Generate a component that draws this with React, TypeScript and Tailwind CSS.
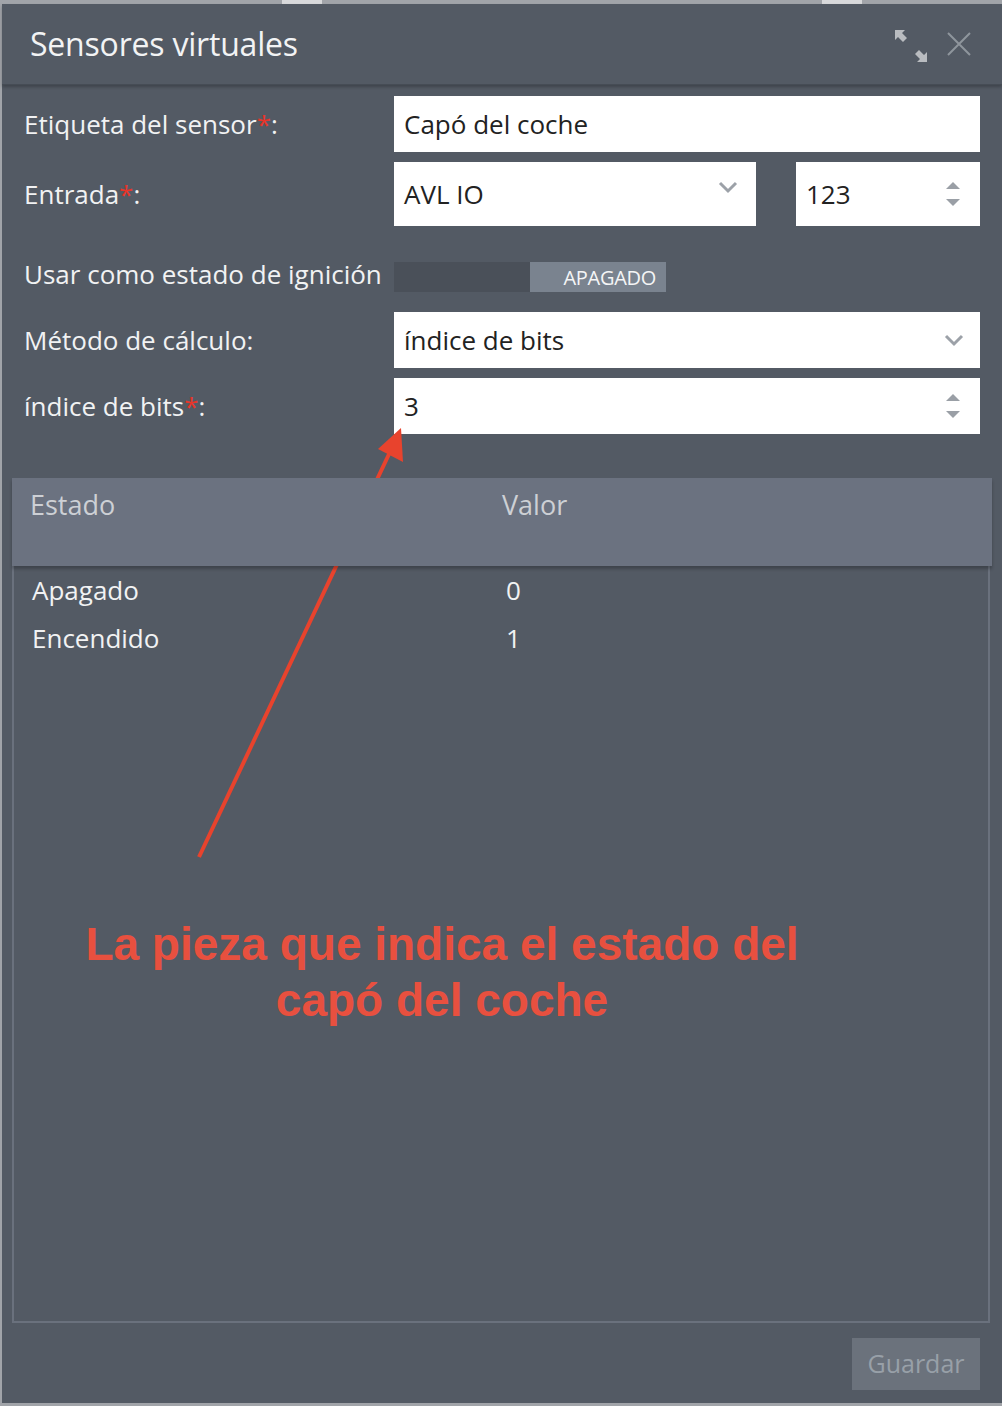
import React from "react";

const Chevron = ({ className = "" }: { className?: string }) => (
  <svg width="20" height="14" viewBox="0 0 20 14" className={className}>
    <path d="M2 3 L10 11 L18 3" fill="none" stroke="#9ca1a8" strokeWidth="3" />
  </svg>
);

const Spinner = () => (
  <svg width="16" height="30" viewBox="0 0 16 30">
    <path d="M1 10 L8 3 L15 10 Z" fill="#9a9fa6" />
    <path d="M1 20 L8 27 L15 20 Z" fill="#9a9fa6" />
  </svg>
);

const Req = () => <span className="text-[#e8352a]">*</span>;

export default function App() {
  return (
    <div
      className="relative w-[1002px] h-[1406px] bg-[#a1a4a9] overflow-hidden"
      style={{ fontFamily: '"Open Sans", "Noto Sans", sans-serif' }}
    >
      {/* top strip highlights */}
      <div className="absolute top-0 left-[282px] w-[40px] h-[4px] bg-[#d8d9db]" />
      <div className="absolute top-0 left-[822px] w-[40px] h-[4px] bg-[#d8d9db]" />

      <div className="absolute left-[2px] top-[4px] w-[1000px] h-[1399px] bg-[#535a64] flex flex-col">
        {/* header */}
        <div className="h-[81px] flex items-center justify-between pl-[28px] pr-[30px] border-b border-[#464c55] shadow-[0_2px_3px_rgba(0,0,0,0.25)]">
          <div className="text-[32px] text-[#f2f3f4] tracking-[-0.2px] pb-[1px]">Sensores virtuales</div>
          <div className="flex items-center gap-[18px]">
            <svg width="34" height="34" viewBox="0 0 34 34" className="mt-[4px]">
              <path d="M1 1 L11 1 L8 4 L13 9 L9 13 L4 8 L1 11 Z" fill="#b9bcc0" />
              <path d="M33 33 L23 33 L26 30 L21 25 L25 21 L30 26 L33 23 Z" fill="#b9bcc0" />
            </svg>
            <svg width="26" height="26" viewBox="0 0 26 26">
              <path d="M2 2 L24 24 M24 2 L2 24" stroke="#8f959c" strokeWidth="2" />
            </svg>
          </div>
        </div>

        {/* form */}
        <div className="pl-[22px] pr-[22px] pt-[11px] flex flex-col text-[#f1f2f3] text-[26px]">
          <div className="flex items-center h-[56px]">
            <div className="w-[370px]">
              Etiqueta del sensor<Req />:
            </div>
            <div className="flex-1 h-[56px] bg-white flex items-center px-[10px] text-[#222]">
              Capó del coche
            </div>
          </div>

          <div className="flex items-center h-[64px] mt-[10px]">
            <div className="w-[370px]">
              Entrada<Req />:
            </div>
            <div className="w-[362px] h-[64px] bg-white flex items-center justify-between pl-[10px] pr-[18px] text-[#222]">
              <span>AVL IO</span>
              <Chevron className="-mt-[14px]" />
            </div>
            <div className="ml-[40px] flex-1 h-[64px] bg-white flex items-center justify-between pl-[10px] pr-[19px] text-[#222]">
              <span>123</span>
              <Spinner />
            </div>
          </div>

          <div className="flex items-center h-[30px] mt-[36px]">
            <div className="w-[370px] whitespace-nowrap pb-[5px]">Usar como estado de ignición</div>
            <div className="flex h-[30px] w-[272px]">
              <div className="w-[136px] bg-[#4a5059]" />
              <div className="w-[136px] bg-[#7a838f] flex items-center justify-end pr-[10px] text-[20px] text-[#f4f5f6] tracking-[-0.3px] pt-[2px]">
                APAGADO
              </div>
            </div>
          </div>

          <div className="flex items-center h-[56px] mt-[20px]">
            <div className="w-[370px]">Método de cálculo:</div>
            <div className="flex-1 h-[56px] bg-white flex items-center justify-between pl-[10px] pr-[16px] text-[#222]">
              <span>índice de bits</span>
              <Chevron />
            </div>
          </div>

          <div className="flex items-center h-[56px] mt-[10px]">
            <div className="w-[370px]">
              índice de bits<Req />:
            </div>
            <div className="flex-1 h-[56px] bg-white flex items-center justify-between pl-[10px] pr-[19px] text-[#222]">
              <span>3</span>
              <Spinner />
            </div>
          </div>
        </div>

        {/* table */}
        <div className="ml-[10px] mr-[10px] mt-[44px] flex flex-col">
          <div className="h-[88px] bg-[#6b7280] flex items-start pt-[7px] text-[27px] text-[#cdd0d5] shadow-[0_3px_3px_rgba(0,0,0,0.25)] relative z-10">
            <div className="w-[490px] pl-[18px]">Estado</div>
            <div>Valor</div>
          </div>
          <div className="h-[757px] border-[2px] border-t-0 border-[#6a717d] mr-[2px] text-[26px] text-[#f1f2f3]">
            <div className="flex items-center h-[48px]">
              <div className="w-[492px] pl-[18px]">Apagado</div>
              <div>0</div>
            </div>
            <div className="flex items-center h-[48px]">
              <div className="w-[492px] pl-[18px]">Encendido</div>
              <div>1</div>
            </div>
          </div>
        </div>

        {/* footer */}
        <div className="flex justify-end pr-[22px] mt-[15px]">
          <div className="w-[128px] h-[52px] bg-[#6b727c] flex items-center justify-center text-[25px] text-[#98a0a8]">
            Guardar
          </div>
        </div>
      </div>

      {/* annotation */}
      <svg className="absolute left-0 top-0 pointer-events-none" width="1002" height="1406">
        <line x1="199" y1="857" x2="390" y2="452" stroke="#e8432d" strokeWidth="4" />
        <path d="M401 428 L403 462 L378 449 Z" fill="#e8432d" />
      </svg>
      <div
        className="absolute left-0 w-[884px] top-[916px] text-center text-[46px] leading-[56px] font-bold text-[#e8503f]"
        style={{ fontFamily: '"Liberation Sans", Arial, sans-serif' }}
      >
        La pieza que indica el estado del
        <br />
        capó del coche
      </div>
    </div>
  );
}
